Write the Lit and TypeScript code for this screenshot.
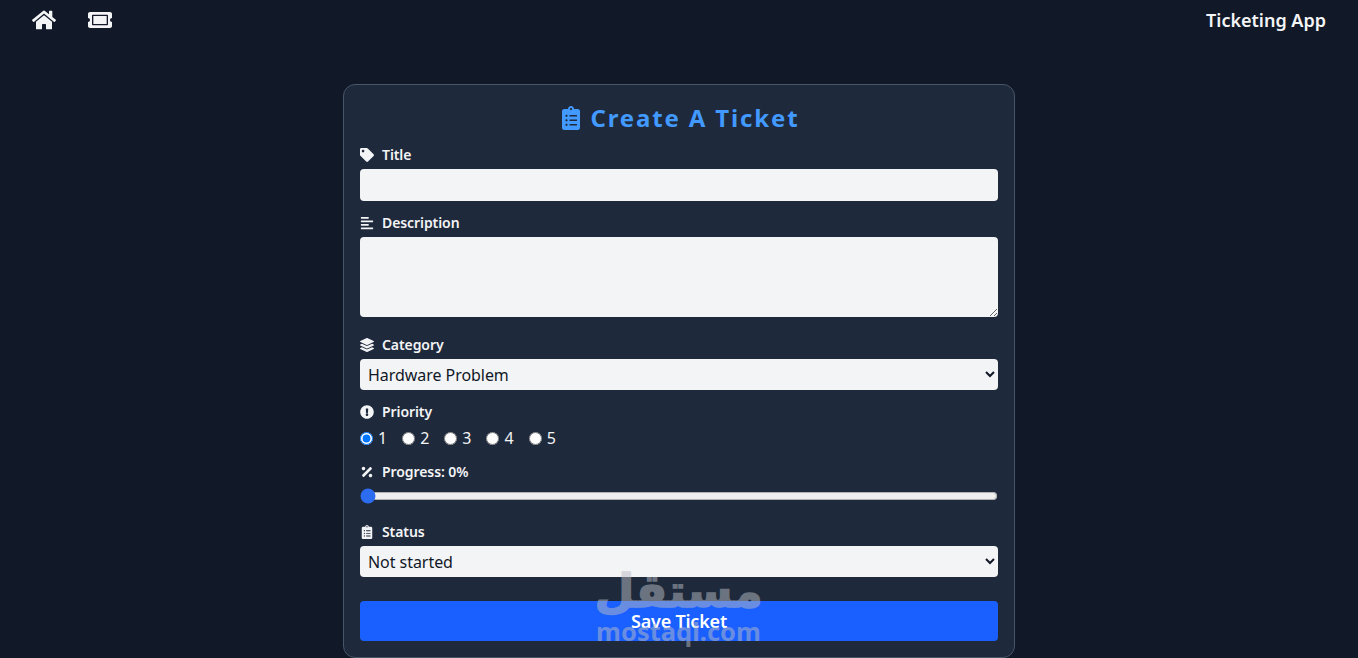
import { LitElement, html, css, svg } from "lit";
import { customElement, state } from "lit/decorators.js";

const ICONS: Record<string, [string, string]> = {
  home: ["0 0 576 512", "M280.37 148.26L96 300.11V464a16 16 0 0 0 16 16l112.06-.29a16 16 0 0 0 15.92-16V368a16 16 0 0 1 16-16h64a16 16 0 0 1 16 16v95.64a16 16 0 0 0 16 16.05L464 480a16 16 0 0 0 16-16V300L295.67 148.26a12.19 12.19 0 0 0-15.3 0zM571.6 251.47L488 182.56V44.05a12 12 0 0 0-12-12h-56a12 12 0 0 0-12 12v72.61L318.47 43a48 48 0 0 0-61 0L4.34 251.47a12 12 0 0 0-1.6 16.9l25.5 31A12 12 0 0 0 45.15 301l235.22-193.74a12.19 12.19 0 0 1 15.3 0L530.9 301a12 12 0 0 0 16.9-1.6l25.5-31a12 12 0 0 0-1.7-16.93z"],
  ticket: ["0 0 576 512", "M128 160h320v192H128V160zm400 96c0 26.51 21.49 48 48 48v96c0 26.51-21.49 48-48 48H48c-26.51 0-48-21.49-48-48v-96c26.51 0 48-21.49 48-48s-21.49-48-48-48v-96c0-26.51 21.49-48 48-48h480c26.51 0 48 21.49 48 48v96c-26.51 0-48 21.49-48 48zm-48-104c0-13.255-10.745-24-24-24H120c-13.255 0-24 10.745-24 24v208c0 13.255 10.745 24 24 24h336c13.255 0 24-10.745 24-24V152z"],
  clipboard: ["0 0 384 512", "M336 64h-80c0-35.3-28.7-64-64-64s-64 28.7-64 64H48C21.5 64 0 85.5 0 112v352c0 26.5 21.5 48 48 48h288c26.5 0 48-21.5 48-48V112c0-26.5-21.5-48-48-48zM96 424c-13.3 0-24-10.7-24-24s10.7-24 24-24 24 10.7 24 24-10.7 24-24 24zm0-96c-13.3 0-24-10.7-24-24s10.7-24 24-24 24 10.7 24 24-10.7 24-24 24zm0-96c-13.3 0-24-10.7-24-24s10.7-24 24-24 24 10.7 24 24-10.7 24-24 24zm96-192c13.3 0 24 10.7 24 24s-10.7 24-24 24-24-10.7-24-24 10.7-24 24-24zm128 368c0 4.4-3.6 8-8 8H168c-4.4 0-8-3.6-8-8v-16c0-4.4 3.6-8 8-8h144c4.4 0 8 3.6 8 8v16zm0-96c0 4.4-3.6 8-8 8H168c-4.4 0-8-3.6-8-8v-16c0-4.4 3.6-8 8-8h144c4.4 0 8 3.6 8 8v16zm0-96c0 4.4-3.6 8-8 8H168c-4.4 0-8-3.6-8-8v-16c0-4.4 3.6-8 8-8h144c4.4 0 8 3.6 8 8v16z"],
  tag: ["0 0 512 512", "M0 252.118V48C0 21.49 21.49 0 48 0h204.118a48 48 0 0 1 33.941 14.059l211.882 211.882c18.745 18.745 18.745 49.137 0 67.882L293.823 497.941c-18.745 18.745-49.137 18.745-67.882 0L14.059 286.059A48 48 0 0 1 0 252.118zM112 64c-26.51 0-48 21.49-48 48s21.49 48 48 48 48-21.49 48-48-21.49-48-48-48z"],
  align: ["0 0 448 512", "M12.83 352h262.34A12.82 12.82 0 0 0 288 339.17v-38.34A12.82 12.82 0 0 0 275.17 288H12.83A12.82 12.82 0 0 0 0 300.83v38.34A12.82 12.82 0 0 0 12.83 352zm0-256h262.34A12.82 12.82 0 0 0 288 83.17V44.83A12.82 12.82 0 0 0 275.17 32H12.83A12.82 12.82 0 0 0 0 44.83v38.34A12.82 12.82 0 0 0 12.83 96zM432 160H16a16 16 0 0 0-16 16v32a16 16 0 0 0 16 16h416a16 16 0 0 0 16-16v-32a16 16 0 0 0-16-16zm0 256H16a16 16 0 0 0-16 16v32a16 16 0 0 0 16 16h416a16 16 0 0 0 16-16v-32a16 16 0 0 0-16-16z"],
  layers: ["0 0 512 512", "M12.41 148.02l232.94 105.67c6.8 3.09 14.49 3.09 21.29 0l232.94-105.67c16.55-7.51 16.55-32.52 0-40.03L266.65 2.31a25.607 25.607 0 0 0-21.29 0L12.41 107.98c-16.55 7.51-16.55 32.53 0 40.04zm487.18 88.28l-58.09-26.33-161.64 73.27c-7.56 3.43-15.59 5.17-23.86 5.17s-16.29-1.74-23.86-5.17L70.51 209.97l-58.1 26.33c-16.55 7.5-16.55 32.5 0 40l232.94 105.59c6.8 3.08 14.49 3.08 21.29 0L499.59 276.3c16.55-7.5 16.55-32.5 0-40zm0 127.8l-57.87-26.23-161.86 73.37c-7.56 3.43-15.59 5.17-23.86 5.17s-16.29-1.74-23.86-5.17L70.29 337.87 12.41 364.1c-16.55 7.5-16.55 32.5 0 40l232.94 105.59c6.8 3.08 14.49 3.08 21.29 0L499.59 404.1c16.55-7.5 16.55-32.5 0-40z"],
  alert: ["0 0 512 512", "M504 256c0 136.997-111.043 248-248 248S8 392.997 8 256C8 119.083 119.043 8 256 8s248 111.083 248 248zm-248 50c-25.405 0-46 20.595-46 46s20.595 46 46 46 46-20.595 46-46-20.595-46-46-46zm-43.673-165.346l7.418 136c.347 6.364 5.609 11.346 11.982 11.346h48.546c6.373 0 11.635-4.982 11.982-11.346l7.418-136c.375-6.874-5.098-12.654-11.982-12.654h-63.383c-6.884 0-12.356 5.78-11.981 12.654z"],
  percent: ["0 0 384 512", "M109.25 173.25c24.99-24.99 24.99-65.52 0-90.51-24.99-24.99-65.52-24.99-90.51 0-24.99 24.99-24.99 65.52 0 90.51 25 25 65.52 25 90.51 0zm256 165.49c-24.99-24.99-65.52-24.99-90.51 0-24.99 24.99-24.99 65.52 0 90.51 24.99 24.99 65.52 24.99 90.51 0 25-24.99 25-65.51 0-90.51zm-1.94-231.43l-22.62-22.62c-12.5-12.5-32.76-12.5-45.25 0L20.69 359.44c-12.5 12.5-12.5 32.76 0 45.25l22.62 22.62c12.5 12.5 32.76 12.5 45.25 0l274.75-274.75c12.5-12.49 12.5-32.75 0-45.25z"],
};

const icon = (name: string, cls = "") => {
  const [vb, d] = ICONS[name];
  return html`<svg class="icon ${cls}" viewBox=${vb} aria-hidden="true">${svg`<path fill="currentColor" d=${d}></path>`}</svg>`;
};

@customElement("app-root")
export class AppRoot extends LitElement {
  @state() priority = 1;

  static styles = css`
    :host {
      display: block;
      height: 658px;
      overflow: hidden;
      position: relative;
      background: #111827;
      color: #fff;
      font-family: "Noto Sans", "Open Sans", sans-serif;
    }
    nav {
      display: flex;
      justify-content: space-between;
      align-items: center;
      height: 40px;
      padding: 0 32px;
      box-sizing: border-box;
    }
    .links { display: flex; gap: 32px; align-items: center; }
    .links svg { width: 24px; height: 24px; color: #f3f4f6; display: block; }
    .brand { font-size: 18px; font-weight: 600; line-height: 40px; letter-spacing: 0; color: #f3f4f6; }
    .page { display: flex; justify-content: center; padding-top: 44px; }
    .card {
      width: 672px;
      box-sizing: border-box;
      padding: 16px;
      background: #1e293b;
      border: 1px solid #475569;
      border-radius: 12px;
      display: flex;
      flex-direction: column;
      gap: 12px;
    }
    h1 {
      margin: 0;
      height: 32px;
      padding: 2px 0 0 3px;
      box-sizing: border-box;
      display: flex;
      justify-content: center;
      align-items: center;
      gap: 11px;
      font-size: 24px;
      line-height: 30px;
      font-weight: 700;
      letter-spacing: 1.85px;
      color: #4299ff;
    }
    h1 .icon { width: 18px; height: 24px; }
    .field { display: flex; flex-direction: column; gap: 4px; }
    .field.wide { padding-bottom: 6px; }
    label.title, .title {
      display: flex;
      align-items: center;
      gap: 8px;
      height: 20px;
      font-size: 14px;
      line-height: 20px;
      font-weight: 600;
      letter-spacing: -0.08px;
      color: #f3f4f6;
    }
    .title .icon { width: 14px; height: 14px; flex: none; }
    input.text, textarea, select {
      display: block;
      width: 100%;
      box-sizing: border-box;
      border: 0;
      border-radius: 4px;
      background: #f3f4f6;
      color: #111827;
      font: inherit;
      font-size: 16px;
      outline: none;
    }
    input.text { height: 32px; padding: 0 8px; }
    textarea { height: 80px; padding: 4px 8px; }
    select { height: 31px; padding: 0 4px; letter-spacing: -0.05px; }
    .radios {
      display: flex;
      align-items: center;
      gap: 15px;
      height: 20px;
      margin: 2px 0;
      font-size: 16px;
      color: #f3f4f6;
    }
    .radios label { display: flex; align-items: center; gap: 5px; }
    .radios input { margin: 0; width: 13px; height: 13px; }
    .range {
      display: block;
      width: 100%;
      height: 16px;
      margin: 2px 0 0;
      accent-color: #2b6cf0;
    }
    button {
      margin-top: 12px;
      height: 40px;
      border: 0;
      border-radius: 4px;
      background: #1a5fff;
      color: #fff;
      font: inherit;
      font-size: 18px;
      font-weight: 600;
      letter-spacing: -0.2px;
    }
    .mark {
      position: absolute;
      left: 596px;
      top: 563px;
      width: 165px;
      display: flex;
      flex-direction: column;
      align-items: center;
      color: #b8bcc4;
      opacity: 0.5;
      pointer-events: none;
      font-weight: 700;
    }
    .mark .ar {
      font-family: "DejaVu Sans", sans-serif;
      font-size: 46px;
      line-height: 56px;
      white-space: nowrap;
      -webkit-text-stroke: 1.5px #b8bcc4;
    }
    .mark .en {
      font-family: "Noto Sans", sans-serif;
      font-size: 25.5px;
      line-height: 28px;
      margin-top: -2px;
      white-space: nowrap;
    }
  `;

  render() {
    return html`
      <nav>
        <div class="links">${icon("home")}${icon("ticket")}</div>
        <div class="brand">Ticketing App</div>
      </nav>
      <div class="page">
        <form class="card" @submit=${(e: Event) => e.preventDefault()}>
          <h1>${icon("clipboard")}<span>Create A Ticket</span></h1>
          <div class="field">
            <label class="title">${icon("tag")}Title</label>
            <input class="text" type="text" />
          </div>
          <div class="field wide">
            <label class="title">${icon("align")}Description</label>
            <textarea></textarea>
          </div>
          <div class="field">
            <label class="title">${icon("layers")}Category</label>
            <select><option>Hardware Problem</option><option>Software Problem</option><option>Project</option></select>
          </div>
          <div class="field">
            <div class="title">${icon("alert")}Priority</div>
            <div class="radios">
              ${[1, 2, 3, 4, 5].map(
                (n) => html`<label><input type="radio" name="priority" .checked=${n === this.priority} @change=${() => (this.priority = n)} />${n}</label>`
              )}
            </div>
          </div>
          <div class="field wide">
            <label class="title">${icon("percent")}Progress: 0%</label>
            <input class="range" type="range" min="0" max="100" value="0" />
          </div>
          <div class="field">
            <label class="title">${icon("clipboard")}Status</label>
            <select><option>Not started</option><option>Started</option><option>Done</option></select>
          </div>
          <button type="submit">Save Ticket</button>
        </form>
      </div>
      <div class="mark"><span class="ar">مستقل</span><span class="en">mostaql.com</span></div>
    `;
  }
}
